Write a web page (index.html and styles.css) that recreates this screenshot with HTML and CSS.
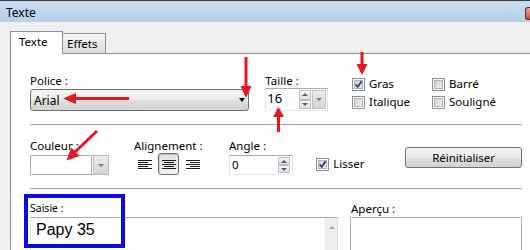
FILE: index.html
```html
<!DOCTYPE html>
<html lang="fr">
<head>
    <meta charset="UTF-8">
    <meta name="viewport" content="width=device-width, initial-scale=1.0">
    <title>Texte</title>
    <link rel="stylesheet" href="styles.css">
</head>
<body>
    <div class="window">
        <div class="titlebar">
            <span class="title">Texte</span>
            <span class="close"></span>
        </div>
        <div class="tabs">
            <div class="tab active">Texte</div>
            <div class="tab">Effets</div>
        </div>
        <div class="panel">
            <div class="content">
                <div class="row row-font">
                    <div class="group police">
                        <label>Police :</label>
                        <div class="combo">
                            <span>Arial</span>
                            <span class="caret"></span>
                        </div>
                    </div>
                    <div class="group taille">
                        <label>Taille :</label>
                        <div class="field size-field">
                            <span class="value">16</span>
                            <div class="spin"><span class="up"></span><span class="down"></span></div>
                            <span class="drop"><span class="caret small"></span></span>
                        </div>
                    </div>
                    <div class="styles">
                        <div class="check"><span class="box"><svg viewBox="0 0 9 9"><path d="M1.6 4.3 L3.8 6.8 L7.6 1.4"/></svg></span>Gras</div>
                        <div class="check"><span class="box"><i></i></span>Barré</div>
                        <div class="check"><span class="box"><i></i></span>Italique</div>
                        <div class="check"><span class="box"><i></i></span>Souligné</div>
                    </div>
                </div>
                <div class="separator"></div>
                <div class="row row-format">
                    <div class="group couleur">
                        <label>Couleur :</label>
                        <div class="color-field">
                            <span class="swatch"></span>
                            <span class="drop"><span class="caret small"></span></span>
                        </div>
                    </div>
                    <div class="group alignement">
                        <label>Alignement :</label>
                        <div class="align-buttons">
                            <span class="align-btn">
                                <svg width="14" height="9" viewBox="0 0 14 9"><rect x="0" y="0" width="14" height="1"/><rect x="0" y="2" width="10" height="1"/><rect x="0" y="4" width="14" height="1"/><rect x="0" y="6" width="10" height="1"/><rect x="0" y="8" width="14" height="1"/></svg>
                            </span>
                            <span class="align-btn pressed">
                                <svg width="14" height="9" viewBox="0 0 14 9"><rect x="0" y="0" width="14" height="1"/><rect x="2" y="2" width="10" height="1"/><rect x="0" y="4" width="14" height="1"/><rect x="2" y="6" width="10" height="1"/><rect x="0" y="8" width="14" height="1"/></svg>
                            </span>
                            <span class="align-btn">
                                <svg width="14" height="9" viewBox="0 0 14 9"><rect x="0" y="0" width="14" height="1"/><rect x="4" y="2" width="10" height="1"/><rect x="0" y="4" width="14" height="1"/><rect x="4" y="6" width="10" height="1"/><rect x="0" y="8" width="14" height="1"/></svg>
                            </span>
                        </div>
                    </div>
                    <div class="group angle">
                        <label>Angle :</label>
                        <div class="field angle-field">
                            <span class="value">0</span>
                            <div class="spin"><span class="up"></span><span class="down"></span></div>
                        </div>
                    </div>
                    <div class="check lisser"><span class="box"><svg viewBox="0 0 9 9"><path d="M1.6 4.3 L3.8 6.8 L7.6 1.4"/></svg></span>Lisser</div>
                    <button class="reset">Réinitialiser</button>
                </div>
                <div class="separator"></div>
                <div class="row row-text">
                    <div class="group saisie">
                        <label>Saisie :</label>
                        <div class="textbox">
                            <span class="text">Papy 35</span>
                            <span class="scroll"><span class="scroll-up"></span></span>
                        </div>
                    </div>
                    <div class="group apercu">
                        <label>Aperçu :</label>
                        <div class="preview"></div>
                    </div>
                </div>
            </div>
        </div>

        <!-- annotations drawn over the dialog -->
        <div class="highlight"></div>
        <svg class="arrows" width="530" height="250" viewBox="0 0 530 250">
            <g fill="#e6161c" stroke="#e6161c" stroke-width="3">
                <line x1="246" y1="57" x2="246" y2="88"/>
                <polygon stroke="none" points="240.5,86 251.5,86 246,98"/>
                <line x1="129" y1="98.5" x2="74" y2="98.5"/>
                <polygon stroke="none" points="63,98.5 76,93 76,104"/>
                <line x1="362" y1="52" x2="362" y2="65"/>
                <polygon stroke="none" points="356.5,64 367.5,64 362,75"/>
                <line x1="278.5" y1="132" x2="278.5" y2="116"/>
                <polygon stroke="none" points="273,117 284,117 278.5,107"/>
                <line x1="97" y1="131" x2="75" y2="152"/>
                <polygon stroke="none" points="79.5,156 71.3,147.6 66.5,160.5"/>
            </g>
        </svg>
    </div>
</body>
</html>
```

FILE: styles.css
```css
* {
    box-sizing: border-box;
}
body {
    margin: 0;
    width: 530px;
    height: 250px;
    overflow: hidden;
    font-family: "Noto Sans", "Open Sans", sans-serif;
    font-size: 11.5px;
    color: #000;
    background: #f0f0f0;
}
.window {
    position: relative;
    width: 530px;
    height: 250px;
    overflow: hidden;
}
.titlebar {
    display: flex;
    align-items: flex-start;
    height: 22px;
    padding-left: 6px;
    border-top: 1px solid #3a3a3a;
    background: linear-gradient(#c8dbf1, #b8cfea);
}
.title {
    font-size: 12px;
    line-height: 14px;
    margin-top: 5px;
}
.close {
    margin-left: auto;
    margin-top: 6px;
    width: 5px;
    height: 13px;
    border: 1px solid #4a2c2c;
    border-right: none;
    border-radius: 3px 0 0 3px;
    background: linear-gradient(#e8a89c, #c8503e);
}
.tabs {
    display: flex;
    align-items: flex-end;
    height: 31px;
    padding: 9px 0 0 10px;
}
.tab {
    border: 1px solid #898c95;
    border-bottom: none;
    line-height: 14px;
}
.tab.active {
    position: relative;
    z-index: 1;
    width: 53px;
    height: 23px;
    margin-bottom: -1px;
    padding: 3px 0 0 8px;
    background: #fff;
}
.tab:not(.active) {
    width: 43px;
    height: 20px;
    padding: 3px 0 0 4px;
    border-left: none;
    background: linear-gradient(#f5f5f5, #e8e8e8 50%, #dadada);
}
.panel {
    height: 197px;
    margin-left: 10px;
    padding: 20px 0 0 19px;
    border-top: 1px solid #898c95;
    border-left: 1px solid #898c95;
    background: #fff;
}
.content {
    width: 492px;
}
.row {
    display: flex;
    align-items: flex-start;
}
.group label {
    display: block;
    line-height: 14px;
}
.separator {
    height: 1px;
    margin-top: 13px;
    background: #a4a4a4;
}

/* first row */
.row-font {
    height: 37px;
}
.police {
    width: 224px;
}
.police label {
    margin-bottom: 1px;
}
.combo {
    display: flex;
    align-items: center;
    height: 22px;
    padding: 0 3px;
    border: 1px solid #707070;
    border-radius: 3px;
    background: linear-gradient(#f4f4f4, #ebebeb 50%, #dedede 51%, #d3d3d3);
    font-size: 12px;
}
.caret {
    margin-left: auto;
    width: 0;
    height: 0;
    border-left: 3.5px solid transparent;
    border-right: 3.5px solid transparent;
    border-top: 4px solid #000;
}
.caret.small {
    margin: 0;
    border-left-width: 3px;
    border-right-width: 3px;
    border-top: 3px solid #7a7a7a;
}
.taille {
    width: 64px;
    margin-left: 16px;
}
.field {
    display: flex;
    padding: 1px;
    border: 1px solid;
    border-color: #abadb3 #dbdfe6 #e3e9ef #e2e3ea;
    background: #fff;
}
.field .value {
    flex: 1;
    align-self: flex-start;
}
.size-field {
    height: 23px;
}
.size-field .value {
    font-size: 13px;
    line-height: 17px;
}
.spin {
    display: flex;
    flex-direction: column;
    width: 12px;
    margin-right: 1px;
}
.spin span {
    flex: 1;
    display: flex;
    align-items: center;
    justify-content: center;
    border: 1px solid #bcbcbc;
    border-radius: 1px;
    background: linear-gradient(#f8f8f8, #dfdfdf);
}
.spin span::after {
    content: "";
    border-left: 3px solid transparent;
    border-right: 3px solid transparent;
}
.spin .up::after {
    border-bottom: 3px solid #4d5d80;
}
.spin .down::after {
    border-top: 3px solid #4d5d80;
}
.drop {
    display: flex;
    align-items: center;
    justify-content: center;
    width: 14px;
    border: 1px solid #c3c3c3;
    background: linear-gradient(#ececec, #d4d4d4);
}
.styles {
    display: grid;
    grid-template-columns: 80px 90px;
    grid-auto-rows: 18px;
    margin: 1px 0 0 24px;
}
.check {
    display: flex;
    align-items: center;
    line-height: 14px;
}
.box {
    flex: none;
    width: 13px;
    height: 13px;
    margin-right: 4px;
    padding: 1px;
    border: 1px solid #8e8f8f;
    background: #fff;
}
.box i,
.box svg {
    display: block;
    width: 9px;
    height: 9px;
    background: linear-gradient(135deg, #c9ccd0, #f6f6f6);
    box-shadow: inset 0 0 0 1px #b0b4b9;
}
.box svg path {
    fill: none;
    stroke: #2f4478;
    stroke-width: 1.9;
}

/* second row */
.row-format {
    height: 36px;
    margin-top: 14px;
}
.couleur {
    width: 79px;
}
.couleur label,
.angle label {
    margin-bottom: 2px;
}
.color-field {
    display: flex;
    height: 20px;
}
.swatch {
    width: 63px;
    border: 1px solid #a9a9a9;
    background: #fff;
}
.color-field .drop {
    width: 16px;
    margin-left: 1px;
    border-color: #bdbdbd;
}
.alignement {
    width: 96px;
    margin-left: 25px;
}
.align-buttons {
    display: flex;
    gap: 3px;
}
.align-btn {
    display: flex;
    align-items: center;
    justify-content: center;
    width: 21px;
    height: 22px;
    border: 1px solid transparent;
    border-radius: 3px;
}
.align-btn svg {
    fill: #1a1a1a;
}
.align-btn.pressed {
    border-color: #6e6e6e;
    background: linear-gradient(#e2e2e2, #f2f2f2);
    box-shadow: inset 1px 1px 1px rgba(0, 0, 0, 0.15);
}
.angle {
    width: 65px;
}
.angle-field {
    height: 20px;
}
.angle-field .value {
    padding-left: 1px;
    line-height: 16px;
}
.lisser {
    width: 90px;
    margin: 18px 0 0 23px;
}
.reset {
    width: 118px;
    height: 21px;
    margin-top: 8px;
    padding: 0;
    border: 1px solid #707070;
    border-radius: 3px;
    background: linear-gradient(#f4f4f4, #ebebeb 50%, #dedede 51%, #d3d3d3);
    font: inherit;
    line-height: 19px;
    color: #000;
}

/* third row */
.row-text {
    margin-top: 13px;
}
.saisie {
    width: 308px;
}
.saisie label {
    font-size: 10.5px;
    line-height: 13px;
    margin-bottom: 2px;
}
.textbox {
    display: flex;
    height: 33px;
    border: 1px solid;
    border-bottom: none;
    border-color: #abadb3 #dbdfe6 #e3e9ef #e2e3ea;
    background: #fff;
}
.text {
    flex: 1;
    padding: 3px 0 0 5px;
    font-family: "Liberation Sans", Arial, sans-serif;
    font-size: 16px;
    line-height: 18px;
}
.scroll {
    display: flex;
    justify-content: center;
    width: 12px;
    border-left: 1px solid #e4e4e4;
    background: #efefef;
}
.scroll-up {
    width: 0;
    height: 0;
    margin-top: 8px;
    border-left: 3px solid transparent;
    border-right: 3px solid transparent;
    border-bottom: 3px solid #a8a8a8;
}
.apercu {
    width: 172px;
    margin-left: 12px;
}
.apercu label {
    margin-bottom: 1px;
    padding-left: 1px;
}
.preview {
    height: 33px;
    border: 1px solid #a9a9a9;
    border-bottom: none;
    background: #fff;
}

/* annotations */
.highlight {
    position: absolute;
    left: 24px;
    top: 194px;
    width: 101px;
    height: 54px;
    border: 4px solid #0b0be6;
}
.arrows {
    position: absolute;
    left: 0;
    top: 0;
}
```
